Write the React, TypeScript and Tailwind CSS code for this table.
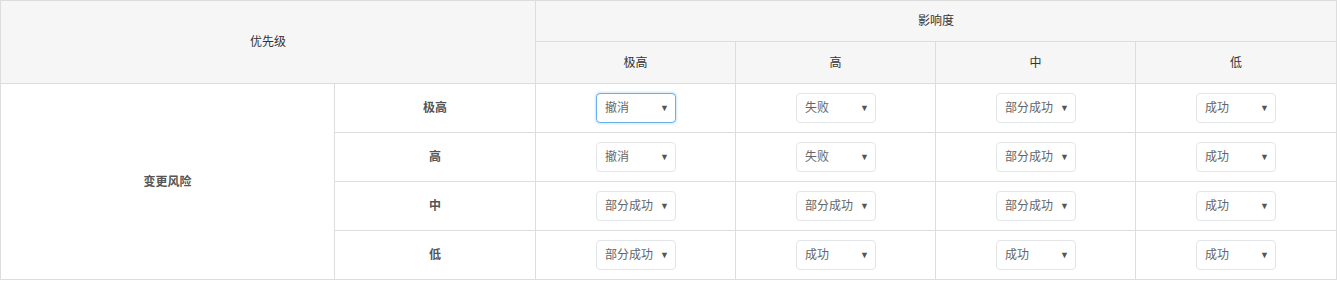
const levels = ["极高", "高", "中", "低"];

// outcome matrix: rows = 变更风险, columns = 影响度
const matrix = [
  ["撤消", "失败", "部分成功", "成功"],
  ["撤消", "失败", "部分成功", "成功"],
  ["部分成功", "部分成功", "部分成功", "成功"],
  ["部分成功", "成功", "成功", "成功"],
];

const SelectBox = ({ value, focused }: { value: string; focused?: boolean }) => (
  <div
    className={`mx-auto flex h-[30px] w-[80px] items-center justify-between rounded-[4px] border bg-white pl-[8px] pr-[6px] text-[12px] text-[#666] ${
      focused
        ? "border-[#66afe9] shadow-[0_0_3px_rgba(102,175,233,0.6)]"
        : "border-[#e3e6e8]"
    }`}
  >
    <span>{value}</span>
    <span className="text-[9px] leading-none text-[#555]">▼</span>
  </div>
);

export default function App() {
  return (
    <div
      className="bg-white text-[12px] text-[#333]"
      style={{ fontFamily: '"Liberation Sans", "Noto Sans CJK SC", sans-serif' }}
    >
      <table className="w-[1336px] table-fixed border-collapse">
        <colgroup>
          <col className="w-[334px]" />
          <col className="w-[201px]" />
          <col className="w-[200px]" />
          <col className="w-[200px]" />
          <col className="w-[200px]" />
          <col className="w-[201px]" />
        </colgroup>
        <thead className="bg-[#f6f6f6]">
          <tr className="h-[41px]">
            <th colSpan={2} rowSpan={2} className="border border-[#ddd] font-normal">
              优先级
            </th>
            <th colSpan={4} className="border border-[#ddd] font-normal">
              影响度
            </th>
          </tr>
          <tr className="h-[42px]">
            {levels.map((l) => (
              <th key={l} className="border border-[#ddd] font-normal">
                {l}
              </th>
            ))}
          </tr>
        </thead>
        <tbody>
          {matrix.map((row, i) => (
            <tr key={i} className="h-[49px]">
              {i === 0 && (
                <td rowSpan={4} className="border border-[#ddd] text-center font-bold text-[#555]">
                  变更风险
                </td>
              )}
              <td className="border border-[#ddd] text-center font-bold text-[#555]">
                {levels[i]}
              </td>
              {row.map((v, j) => (
                <td key={j} className={`border border-[#ddd] ${j === 3 ? "pl-0" : "pl-[1px]"}`}>
                  <SelectBox value={v} focused={i === 0 && j === 0} />
                </td>
              ))}
            </tr>
          ))}
        </tbody>
      </table>
    </div>
  );
}
